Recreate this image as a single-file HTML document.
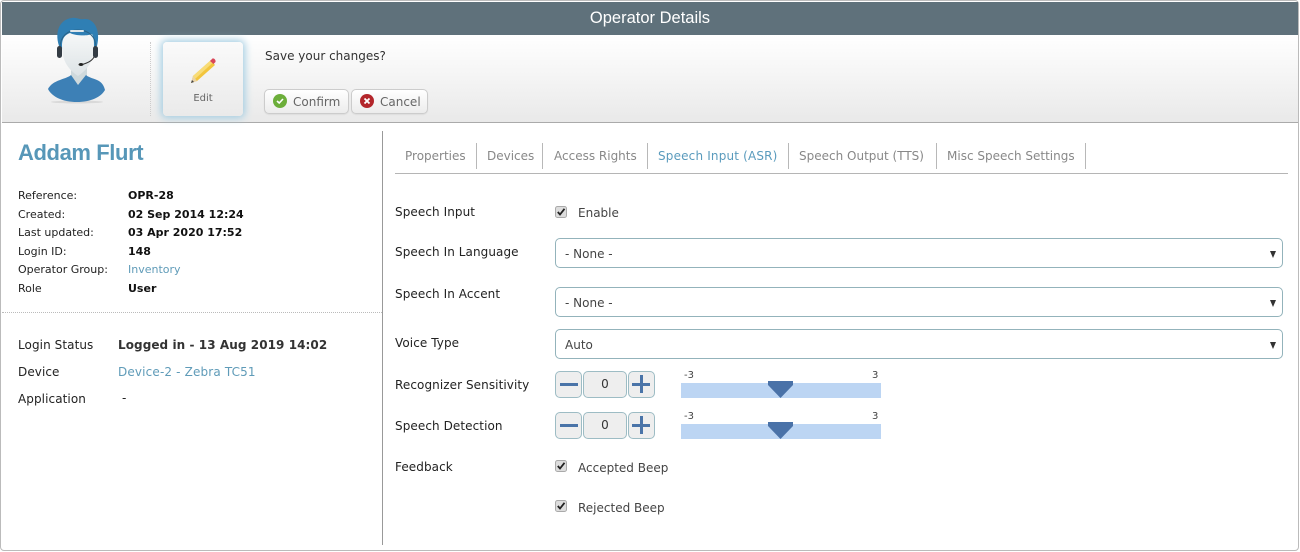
<!DOCTYPE html>
<html>
<head>
<meta charset="utf-8">
<style>
html,body{margin:0;padding:0;width:1300px;height:552px;background:#fff;overflow:hidden}
body{position:relative;font-family:"DejaVu Sans","Liberation Sans",sans-serif;font-size:12px;color:#333}
.a{position:absolute}
.t{position:absolute;white-space:nowrap;line-height:14px}
.s{font-size:11px;color:#222}
.b{font-size:11px;font-weight:bold;color:#111}
.l{color:#222;font-size:12px;letter-spacing:.08px}
.tab{color:#888;font-size:12px}
.sep{position:absolute;top:143px;width:1px;height:26px;background:#b8b8b8}
.sel{position:absolute;left:555px;width:726px;height:28px;border:1px solid #93b3bb;border-radius:5px;background:#fff;box-sizing:content-box}
.sel span{position:absolute;left:9px;top:8px;line-height:14px;font-size:12px;color:#444}
.sel i{position:absolute;right:6px;top:12px;width:0;height:0;border-left:3px solid transparent;border-right:3px solid transparent;border-top:7px solid #333}
.st{position:absolute;box-sizing:border-box;height:27px;background:#eee;border:1px solid #9dbcc4;border-radius:5px;text-align:center;line-height:25px;font-size:12px;color:#333}
.sl{position:absolute;left:681px;width:200px;height:15px;background:#bcd5f3}
.m{position:absolute;font-size:10px;line-height:10px;color:#444;white-space:nowrap}
.btn{position:absolute;top:89px;height:25px;box-sizing:border-box;border:1px solid #ccc;border-radius:5px;background:linear-gradient(#fff,#ececec);box-shadow:0 1px 1px #ddd}
</style>
</head>
<body>
<div class="a" style="left:0;top:0;width:1299px;height:551px;box-sizing:border-box;border:1px solid #bbb;border-radius:4px"></div>
<div class="a" style="left:2px;top:2px;width:1296px;height:33px;background:#5f717b"></div>
<div class="a" style="left:2px;top:35px;width:1296px;height:87px;background:linear-gradient(#fff,#e9e9e9)"></div>
<div class="a" style="left:2px;top:122px;width:1296px;height:1px;background:#aaa"></div>
<div class="t" style="left:2px;width:1296px;top:10px;line-height:17px;text-align:center;color:#fff;font-family:'Liberation Sans',sans-serif;font-size:16.5px">Operator Details</div>

<svg class="a" style="left:40px;top:10px" width="75" height="100" viewBox="40 10 75 100">
<defs><linearGradient id="fc" x1="0" y1="0" x2="0" y2="1"><stop offset="0" stop-color="#f6f8f8"/><stop offset="1" stop-color="#dde3e6"/></linearGradient></defs>
<ellipse cx="77" cy="102" rx="26" ry="1.5" fill="#ccc" opacity=".6"/>
<path d="M71 66H87V80L79 88L71 80Z" fill="#cfd9dc"/>
<path d="M48 89C50 85 54 82 60 80C65 78 69 77 71 75L78 85L86 75C88 77 92 78 97 80C102 82 104 86 105 90C101 97 91 102 77 102C63 102 52 97 48 89Z" fill="#3d80b6"/>
<path d="M59 46C54 30 61 19 72 18C76 17 80 20 84 19C94 18 101 30 97 46L92 50L64 50Z" fill="#2f7fb4"/>
<path d="M62 46C62 38 65 35 70 33C76 36 88 36 92 34C94 38 94 42 94 46C94 58 90 68 78 76C66 68 62 58 62 46Z" fill="url(#fc)"/>
<path d="M60 48C60 36 68 30 78 30C88 30 96 36 96 48" fill="none" stroke="#2a6285" stroke-width="1"/>
<rect x="70" y="30" width="14" height="2" rx="1" fill="#dfe7ea"/>
<rect x="57" y="46" width="5" height="12" rx="2.5" fill="#343c44"/>
<rect x="93" y="46" width="5" height="12" rx="2.5" fill="#343c44"/>
<path d="M94 57C92 61 88 63 82 64.5" fill="none" stroke="#333" stroke-width="1"/>
<ellipse cx="81" cy="64.5" rx="2.5" ry="1.5" fill="#222"/>
</svg>

<div class="a" style="left:150px;top:42px;height:74px;border-left:1px dotted #ccc"></div>
<div class="a" style="left:163px;top:42px;width:80px;height:74px;border-radius:4px;background:linear-gradient(#fafafa,#eaeaea);box-shadow:0 0 8px 2px #a3cde2"></div>
<svg class="a" style="left:188px;top:56px" width="30" height="30" viewBox="188 56 30 30">
<path d="M191 83L193 76L211 60L215 65L197 81Z" fill="#f2c53d"/>
<path d="M193 76L211 60L213 62.5L195 79Z" fill="#f8dc77"/>
<path d="M191 83L193 76L197 81Z" fill="#e9d3a8"/>
<path d="M191 83L192 80L194 82Z" fill="#444"/>
<path d="M210 61L212.5 58.5C214 58 216 60 215.5 62L213.5 64Z" fill="#d9475a"/>
</svg>
<div class="t" style="left:163px;width:80px;top:92px;text-align:center;font-size:10px;color:#666">Edit</div>

<div class="t" style="left:265px;top:49px;color:#333;font-size:12px">Save your changes?</div>
<div class="btn" style="left:264px;width:85px"></div>
<svg class="a" style="left:272px;top:93px" width="16" height="16"><circle cx="8" cy="8" r="7" fill="#6cae3a"/><path d="M5 8L7.2 10L11 6" fill="none" stroke="#fff" stroke-width="1.6"/></svg>
<div class="t" style="left:293px;top:95px;color:#666">Confirm</div>
<div class="btn" style="left:351px;width:77px"></div>
<svg class="a" style="left:359px;top:93px" width="16" height="16"><circle cx="8" cy="8" r="7" fill="#b3262b"/><path d="M5.5 5.5L10.5 10.5M10.5 5.5L5.5 10.5" fill="none" stroke="#fff" stroke-width="1.8"/></svg>
<div class="t" style="left:380px;top:95px;color:#666">Cancel</div>

<div class="t" style="left:18px;top:141px;line-height:24px;font-family:'Liberation Sans',sans-serif;font-size:22px;font-weight:bold;color:#5797b8;letter-spacing:-.4px">Addam Flurt</div>
<div class="t s" style="left:18px;top:189px">Reference:</div><div class="t b" style="left:128px;top:189px">OPR-28</div>
<div class="t s" style="left:18px;top:208px">Created:</div><div class="t b" style="left:128px;top:208px">02 Sep 2014 12:24</div>
<div class="t s" style="left:18px;top:226px">Last updated:</div><div class="t b" style="left:128px;top:226px">03 Apr 2020 17:52</div>
<div class="t s" style="left:18px;top:245px">Login ID:</div><div class="t b" style="left:128px;top:245px">148</div>
<div class="t s" style="left:18px;top:263px">Operator Group:</div><div class="t s" style="left:128px;top:263px;color:#5f9bb8">Inventory</div>
<div class="t s" style="left:18px;top:282px">Role</div><div class="t b" style="left:128px;top:282px">User</div>

<div class="a" style="left:2px;top:312px;width:380px;border-top:1px dotted #bbb"></div>
<div class="t l" style="left:18px;top:338px">Login Status</div><div class="t" style="left:118px;top:338px;font-weight:bold;color:#333;letter-spacing:.07px">Logged in - 13 Aug 2019 14:02</div>
<div class="t l" style="left:18px;top:365px">Device</div><div class="t" style="left:118px;top:365px;color:#5f9bb8;letter-spacing:.15px">Device-2 - Zebra TC51</div>
<div class="t l" style="left:18px;top:392px">Application</div><div class="t l" style="left:122px;top:391px">-</div>

<div class="a" style="left:382px;top:131px;width:1px;height:414px;background:#999"></div>

<div class="t tab" style="left:405px;top:149px">Properties</div><div class="sep" style="left:476px"></div>
<div class="t tab" style="left:487px;top:149px">Devices</div><div class="sep" style="left:542px"></div>
<div class="t tab" style="left:554px;top:149px">Access Rights</div><div class="sep" style="left:647px"></div>
<div class="t tab" style="left:658px;top:149px;color:#5a9bbd;letter-spacing:.17px">Speech Input (ASR)</div><div class="sep" style="left:788px"></div>
<div class="t tab" style="left:799px;top:149px">Speech Output (TTS)</div><div class="sep" style="left:936px"></div>
<div class="t tab" style="left:947px;top:149px">Misc Speech Settings</div><div class="sep" style="left:1085px"></div>
<div class="a" style="left:395px;top:173px;width:893px;height:1px;background:#b5b5b5"></div>

<div class="t l" style="left:395px;top:205px">Speech Input</div>
<svg class="a" style="left:555px;top:206px" width="13" height="13"><rect x=".5" y=".5" width="11" height="11" rx="2" fill="#ddd" stroke="#aaa"/><path d="M2.8 6L5 8.5L9.5 2.8" fill="none" stroke="#222" stroke-width="1.8"/></svg>
<div class="t" style="left:578px;top:206px;color:#444">Enable</div>

<div class="t l" style="left:395px;top:245px">Speech In Language</div>
<div class="sel" style="top:238px"><span>- None -</span><i></i></div>
<div class="t l" style="left:395px;top:287px">Speech In Accent</div>
<div class="sel" style="top:287px"><span>- None -</span><i></i></div>
<div class="t l" style="left:395px;top:336px">Voice Type</div>
<div class="sel" style="top:329px"><span>Auto</span><i></i></div>

<div class="t l" style="left:395px;top:378px">Recognizer Sensitivity</div>
<div class="st" style="left:555px;top:371px;width:27px"></div>
<div class="a" style="left:560px;top:383px;width:18px;height:3px;background:#4a74a8"></div>
<div class="st" style="left:583px;top:371px;width:44px">0</div>
<div class="st" style="left:628px;top:371px;width:27px"></div>
<div class="a" style="left:632px;top:383px;width:18px;height:3px;background:#4a74a8"></div>
<div class="a" style="left:640px;top:375px;width:3px;height:18px;background:#4a74a8"></div>
<div class="m" style="left:684px;top:371px">-3</div><div class="m" style="left:872px;top:371px">3</div>
<div class="sl" style="top:383px"></div>
<svg class="a" style="left:767px;top:381px" width="27" height="18"><path d="M1 0H26V4L13.5 17L1 4Z" fill="#4a72a8"/></svg>

<div class="t l" style="left:395px;top:419px">Speech Detection</div>
<div class="st" style="left:555px;top:412px;width:27px"></div>
<div class="a" style="left:560px;top:424px;width:18px;height:3px;background:#4a74a8"></div>
<div class="st" style="left:583px;top:412px;width:44px">0</div>
<div class="st" style="left:628px;top:412px;width:27px"></div>
<div class="a" style="left:632px;top:424px;width:18px;height:3px;background:#4a74a8"></div>
<div class="a" style="left:640px;top:416px;width:3px;height:18px;background:#4a74a8"></div>
<div class="m" style="left:684px;top:412px">-3</div><div class="m" style="left:872px;top:412px">3</div>
<div class="sl" style="top:424px"></div>
<svg class="a" style="left:767px;top:422px" width="27" height="18"><path d="M1 0H26V4L13.5 17L1 4Z" fill="#4a72a8"/></svg>

<div class="t l" style="left:395px;top:460px">Feedback</div>
<svg class="a" style="left:555px;top:460px" width="13" height="13"><rect x=".5" y=".5" width="11" height="11" rx="2" fill="#ddd" stroke="#aaa"/><path d="M2.8 6L5 8.5L9.5 2.8" fill="none" stroke="#222" stroke-width="1.8"/></svg>
<div class="t" style="left:578px;top:461px;color:#444">Accepted Beep</div>
<svg class="a" style="left:555px;top:500px" width="13" height="13"><rect x=".5" y=".5" width="11" height="11" rx="2" fill="#ddd" stroke="#aaa"/><path d="M2.8 6L5 8.5L9.5 2.8" fill="none" stroke="#222" stroke-width="1.8"/></svg>
<div class="t" style="left:578px;top:501px;color:#444">Rejected Beep</div>
</body>
</html>
